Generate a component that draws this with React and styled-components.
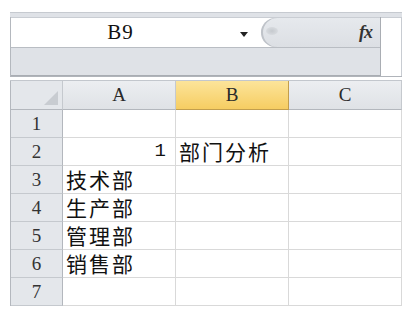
import React from 'react';
import styled, { createGlobalStyle } from 'styled-components';

const GlobalStyle = createGlobalStyle`
  html, body {
    margin: 0;
    padding: 0;
    background: #ffffff;
  }
`

const columns = ['A', 'B', 'C']
const rows = [
  { n: 1, a: '', b: '' },
  { n: 2, a: '1', b: '部门分析', num: true },
  { n: 3, a: '技术部', b: '' },
  { n: 4, a: '生产部', b: '' },
  { n: 5, a: '管理部', b: '' },
  { n: 6, a: '销售部', b: '' },
  { n: 7, a: '', b: '' },
]

const App = () => {
  return (
    <Page>
      <GlobalStyle />
      <Frame>
        <TopStrip />
        <FormulaBar>
          <BarLeft>
            <BarRow>
              <NameBox>
                <NameText>B9</NameText>
                <DropArrow />
              </NameBox>
              <FxArea>
                <Handle>
                  <HandleDot />
                </Handle>
                <Fx>fx</Fx>
              </FxArea>
            </BarRow>
            <BarRowLower />
          </BarLeft>
          <FormulaInput />
        </FormulaBar>
        <BarEdge />
        <Sheet>
          <Corner>
            <CornerTriangle />
          </Corner>
          {columns.map(c => (
            <ColHeader key={c} selected={c === 'B'}>{c}</ColHeader>
          ))}
          {rows.map(r => (
            <React.Fragment key={r.n}>
              <RowHeader>{r.n}</RowHeader>
              <Cell align={r.num ? 'right' : 'left'} num={r.num}>{r.a}</Cell>
              <Cell>{r.b}</Cell>
              <Cell />
            </React.Fragment>
          ))}
        </Sheet>
      </Frame>
    </Page>
  )
}

const Page = styled.div`
  padding: 12px 0 0 10px;
  width: 409px;
  height: 317px;
  box-sizing: border-box;
  overflow: hidden;
`

const Frame = styled.div`
  width: 392px;
  display: flex;
  flex-direction: column;
`

const TopStrip = styled.div`
  height: 4px;
  border-top: 1px solid #c6cad0;
  background: #dfe2e7;
`

const FormulaBar = styled.div`
  display: flex;
  border-left: 1px solid #b4b8be;
  border-right: 1px solid #c8ccd2;
`

const BarLeft = styled.div`
  width: 369px;
  display: flex;
  flex-direction: column;
  border-right: 1px solid #a9adb3;
`

const BarRow = styled.div`
  height: 29px;
  display: flex;
  border-top: 1px solid #c9cdd3;
  border-bottom: 1px solid #b9bdc3;
  background: #ffffff;
`

const BarRowLower = styled.div`
  height: 27px;
  background: #dfe2e7;
  border-bottom: 1px solid #a9adb3;
`

const NameBox = styled.div`
  flex: 1;
  display: flex;
  align-items: center;
  position: relative;
`

const NameText = styled.div`
  width: 219px;
  text-align: center;
  font-family: "Liberation Serif", serif;
  font-size: 21px;
  color: #111;
  letter-spacing: 1px;
`

const DropArrow = styled.div`
  position: absolute;
  left: 229px;
  top: 14px;
  width: 0;
  height: 0;
  border-left: 4px solid transparent;
  border-right: 4px solid transparent;
  border-top: 5px solid #222;
`

const FxArea = styled.div`
  width: 119px;
  display: flex;
  align-items: center;
  justify-content: space-between;
  background: linear-gradient(#e6e9ed, #dcdfe4);
  border-radius: 15px 0 0 15px;
  box-shadow: inset 2px 0 0 #bfc3c9;
  padding-right: 8px;
  box-sizing: border-box;
`

const Handle = styled.div`
  width: 22px;
  height: 100%;
  display: flex;
  align-items: center;
  justify-content: center;
`

const HandleDot = styled.div`
  width: 12px;
  height: 8px;
  border-radius: 50%;
  background: radial-gradient(#c5c9ce, #dfe2e6);
  margin-top: -4px;
`

const Fx = styled.div`
  font-family: "Liberation Serif", serif;
  font-style: italic;
  font-weight: bold;
  font-size: 18px;
  color: #333;
  letter-spacing: -1px;
`

const FormulaInput = styled.div`
  flex: 1;
  background: #ffffff;
  border-top: 1px solid #c9cdd3;
`

const BarEdge = styled.div`
  height: 3px;
  border-top: 1px solid #b0b4ba;
  border-bottom: 1px solid #c3c7cd;
  background: #ffffff;
`

const Sheet = styled.div`
  display: grid;
  grid-template-columns: 52px 113px 113px 113px;
  grid-template-rows: 29px repeat(7, 28px);
  border-left: 1px solid #b4b8be;
  width: 392px;
  box-sizing: border-box;
`

const Corner = styled.div`
  background: #e4e7eb;
  border-right: 1px solid #c5c9ce;
  border-bottom: 1px solid #b3b7bd;
  position: relative;
`

const CornerTriangle = styled.div`
  position: absolute;
  right: 4px;
  bottom: 4px;
  width: 0;
  height: 0;
  border-left: 14px solid transparent;
  border-bottom: 14px solid #c8ccd1;
`

const ColHeader = styled.div`
  display: flex;
  align-items: center;
  justify-content: center;
  font-family: "Liberation Serif", serif;
  font-size: 19px;
  color: #2a2a2a;
  background: ${p => p.selected
    ? 'linear-gradient(#fce49a, #f6cd62)'
    : 'linear-gradient(#eceef1, #dfe2e6)'};
  border-right: 1px solid ${p => p.selected ? '#c29e4d' : '#c5c9ce'};
  border-bottom: 1px solid ${p => p.selected ? '#c29e4d' : '#b3b7bd'};
  box-sizing: border-box;
`

const RowHeader = styled.div`
  display: flex;
  align-items: center;
  justify-content: center;
  font-family: "Liberation Serif", serif;
  font-size: 19px;
  color: #333;
  background: #e4e7eb;
  border-right: 1px solid #b3b7bd;
  border-bottom: 1px solid #c5c9ce;
`

const Cell = styled.div`
  display: flex;
  align-items: center;
  justify-content: ${p => p.align === 'right' ? 'flex-end' : 'flex-start'};
  padding: 0 ${p => p.align === 'right' ? '9px' : '3px'};
  font-family: ${p => p.num ? '"Liberation Mono"' : '"Noto Sans CJK SC"'}, "Noto Sans CJK SC", sans-serif;
  font-size: ${p => p.num ? '19px' : '21px'};
  letter-spacing: ${p => p.num ? '0' : '2px'};
  color: #111;
  background: #ffffff;
  border-right: 1px solid #d9d9d9;
  border-bottom: 1px solid #d9d9d9;
  white-space: nowrap;
  overflow: visible;
  line-height: 1;
`

export default App;
